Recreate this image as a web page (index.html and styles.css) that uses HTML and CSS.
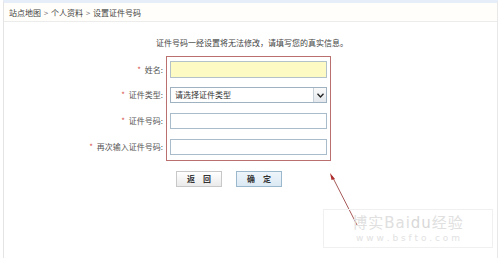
FILE: index.html
```html
<!DOCTYPE html>
<html lang="zh-CN">
<head>
<meta charset="utf-8">
<link rel="stylesheet" href="styles.css">
</head>
<body>
<div class="page">
  <div class="crumb">站点地图 <span class="sep">&gt;</span> 个人资料 <span class="sep">&gt;</span> 设置证件号码</div>
  <p class="intro">证件号码一经设置将无法修改，请填写您的真实信息。</p>
  <div class="form">
    <div class="labels">
      <div class="label lrow1"><span class="star">*</span> 姓名:</div>
      <div class="label"><span class="star">*</span> 证件类型:</div>
      <div class="label"><span class="star">*</span> 证件号码:</div>
      <div class="label"><span class="star">*</span> 再次输入证件号码:</div>
    </div>
    <div class="box">
      <div class="field name"></div>
      <div class="field select"><span class="opt">请选择证件类型</span><span class="drop"><svg width="7" height="5" viewBox="0 0 7 5"><path d="M0.5 0.8 L3.5 4 L6.5 0.8" fill="none" stroke="#222" stroke-width="1.3"/></svg></span></div>
      <div class="field"></div>
      <div class="field"></div>
    </div>
  </div>
  <div class="buttons">
    <div class="btn back">返 回</div>
    <div class="btn ok">确 定</div>
  </div>
  <svg class="arrow" width="40" height="60" viewBox="0 0 40 60">
    <line x1="29" y1="53" x2="4" y2="4" stroke="#a85a5a" stroke-width="1"/>
    <path d="M2 1 L7 7 L3.5 8 Z" fill="#b03030"/>
  </svg>
  <div class="watermark">
    <div class="wm-top"><span>博实</span><span class="wm-bai">Bai</span><span class="wm-du">du</span><span>经验</span></div>
    <div class="wm-url">w w w . b s f t o . c o m</div>
  </div>
</div>
</body>
</html>
```
FILE: styles.css
```css
* { box-sizing: border-box; }
body {
  margin: 0;
  background: #fff;
  font-family: "Noto Sans CJK SC", "Noto Sans", sans-serif;
  font-size: 8px;
  color: #333;
}
.page {
  position: relative;
  margin-left: 3px;
  width: 495px;
  height: 258px;
  border-left: 1px solid #e4e4e4;
  border-right: 1px solid #e8e8e8;
  border-top: 3px solid #e6eefa;
}
.crumb {
  height: 19px;
  padding: 4px 0 0 5px;
  line-height: 11px;
  color: #444;
  border-bottom: 1px solid #ececec;
  background: #fffefa;
}
.sep { color: #777; margin: 0 1px; }
.intro {
  margin: 0;
  padding: 15px 0 0 152px;
  line-height: 11px;
  color: #444;
}
.form {
  display: flex;
  margin-top: 8px;
  padding-left: 70px;
}
.labels {
  width: 92px;
  padding-top: 5px;
  padding-right: 3px;
  display: flex;
  flex-direction: column;
  gap: 10px;
  align-items: flex-end;
}
.label {
  height: 16px;
  line-height: 16px;
  color: #555;
  white-space: nowrap;
}
.label.lrow1 { height: 17px; line-height: 17px; margin-bottom: -1px; }
.star { color: #d9534f; margin-right: 2px; }
.box {
  width: 165px;
  border: 1px solid #b9706e;
  padding: 4px 3px 5px 3px;
  display: flex;
  flex-direction: column;
  gap: 10px;
}
.field {
  height: 16px;
  border: 1px solid #a9bccb;
  background: #fff;
  width: 157px;
}
.field.name {
  height: 17px;
  background: #fdfac4;
  border-color: #b3c2c8;
  margin-bottom: -1px;
}
.field.select {
  display: flex;
  align-items: center;
  justify-content: space-between;
  padding-left: 4px;
  border-color: #9fb2c2;
}
.opt { color: #333; line-height: 14px; }
.drop {
  width: 13px;
  height: 14px;
  border-left: 1px solid #c8d0d8;
  background: linear-gradient(#fafafa, #e4e8ec);
  display: flex;
  align-items: center;
  justify-content: center;
}
.buttons {
  display: flex;
  gap: 14px;
  margin-top: 10px;
  padding-left: 172px;
}
.btn {
  width: 46px;
  height: 16px;
  line-height: 14px;
  text-align: center;
  font-weight: bold;
  color: #333;
  word-spacing: 6px;
  border: 1px solid #c8c8c8;
  background: linear-gradient(#ffffff, #eaeaea);
}
.btn.ok {
  background: linear-gradient(#eef5fb, #dbe9f4);
  border-color: #9cb8cc;
  color: #333;
}
.arrow {
  position: absolute;
  left: 324px;
  top: 169px;
}
.watermark {
  position: absolute;
  left: 319px;
  top: 206px;
  width: 170px;
  height: 39px;
  border: 1px solid #f0f0f0;
  color: #e0e0e0;
  text-align: center;
  padding-top: 3px;
}
.wm-top {
  font-size: 15px;
  line-height: 18px;
  letter-spacing: 1px;
}
.wm-bai, .wm-du { font-family: "DejaVu Sans", sans-serif; }
.wm-du { color: #d8d8d8; }
.wm-url {
  font-family: "DejaVu Sans", sans-serif;
  font-size: 9px;
  line-height: 12px;
  color: #e2e2e2;
}
```
